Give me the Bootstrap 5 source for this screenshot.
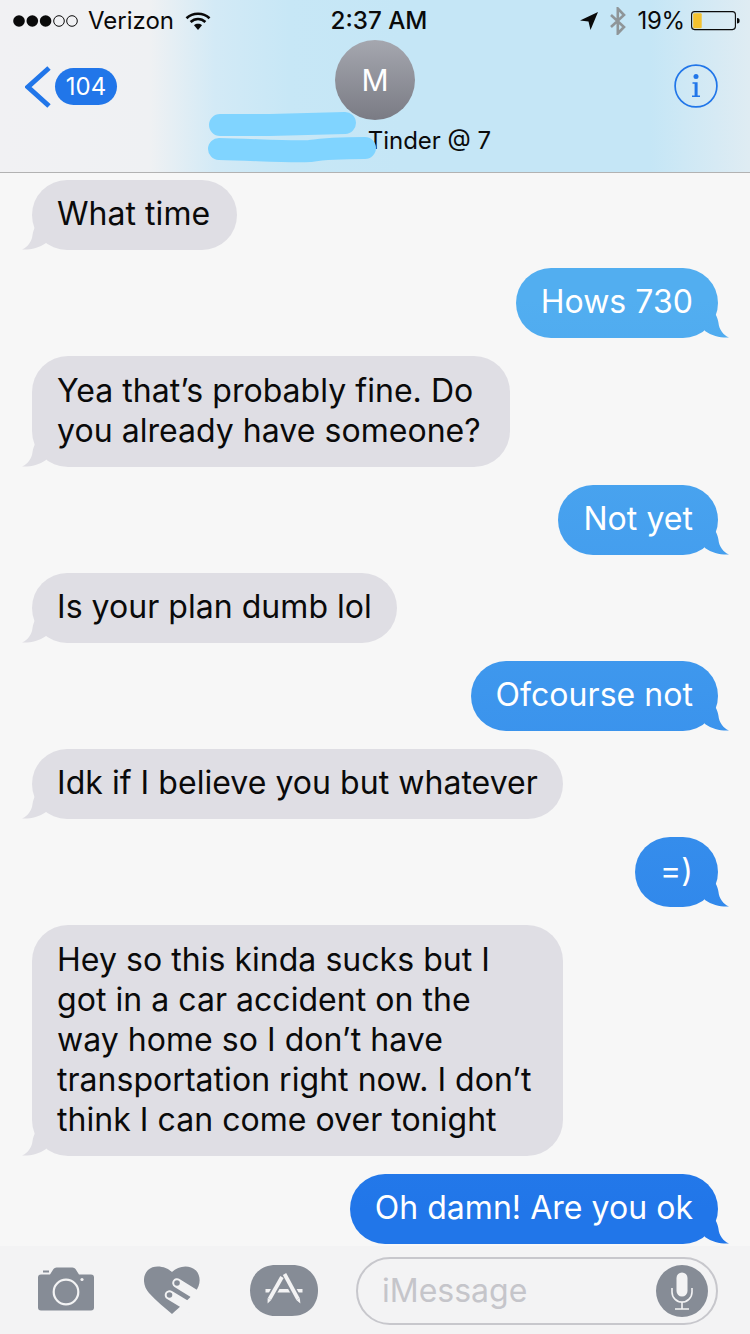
<!DOCTYPE html>
<html lang="en">
<head>
<meta charset="utf-8">
<title>Messages</title>
<link href="https://cdn.jsdelivr.net/npm/bootstrap@5.3.0/dist/css/bootstrap.min.css" rel="stylesheet">
<style>
html,body{height:1334px;overflow:hidden}
body{background:#f7f7f7;font-family:Inter,"Liberation Sans",sans-serif;color:#0a0a0a;width:750px;position:relative}
.phone{height:1334px}
.top-bar{height:173px;border-bottom:1px solid #b2b2b2;background:linear-gradient(90deg,#f1f1f3 0,#eff1f3 150px,#d3eaf6 215px,#c7e7f6 290px,#c5e6f6 400px,#c5e6f6 650px,#dfecf3 750px);flex:none}
.status-row{height:40px;font-size:24px;line-height:40px;padding-top:1px}
.status-side{flex:1 1 0;min-width:0}
.signal-dots{margin:0 7px 0 13px}
.wifi-icon{margin-left:11px}
.bt-icon{margin-left:10px}
.batt-icon{margin:0 10px 0 6px}
.pct{margin-left:10px;letter-spacing:-.2px}
.clock{font-weight:500;padding-left:8px;font-size:24.2px}
.nav-row{height:80px}
.back-arrow{margin:26px 4px 0 25px}
.count-pill{margin-top:28px;width:62px;height:37px;border-radius:19px;background:#2176e9;color:#fff;font-size:24px;line-height:37px;text-align:center}
.avatar-disc{width:80px;height:80px;border-radius:50%;background:linear-gradient(180deg,#a5a7af,#7a7b84);color:#fff;font-size:30px;line-height:80px;text-align:center}
.info-icon{margin:24px 32px 0 0}
.sub-row{height:52px;font-size:24px;line-height:40px;padding:1px 0 0 354px}
.scribble{position:absolute;left:200px;top:105px}
.thread{flex:1 1 auto;min-height:0;padding:7px 32px 0;gap:18px}
.msg{position:relative;padding:14px 25px 16px;font-size:32px;line-height:40px;letter-spacing:.04px;border-radius:36px;white-space:nowrap}
.msg::after{content:"";position:absolute;bottom:0;width:30px;height:24px}
.msg-in{align-self:flex-start;background:#dfdee4}
.msg-in::after{left:-10px;background:#dfdee4;clip-path:path("M14 0C12 2 11 6 10.5 9C10 15 6 21 0 23.5C8 24 17 22 24 17L30 0Z")}
.msg-out,.msg-out::after{background:linear-gradient(180deg,#52aef0 300px,#2176e9 1209px) fixed}
.msg-out{align-self:flex-end;color:#fff}
.msg-out::after{right:-11px;clip-path:path("M16 0C18 2 19 6 19.5 9C20 15 24 21 30 23.5C22 24 13 22 6 17L0 0Z")}
.msg-first{width:205px}
.msg-pair{padding:15px 25px 16px;width:478px}
.msg-long{padding:15px 25px 16px;width:531px}
.composer{flex:none;height:88px;background:#f3f3f4;padding:11px 32px 0 38px}
.composer-icons{width:318px;padding-top:8px}
.cam-icon{margin-top:2px}
.heart-icon{margin:1px 0 0 50px}
.store-icon{margin-left:50px}
.input-pill{width:362px;height:68px;border:2px solid #c7c7cc;border-radius:34px;font-size:32px;color:#c5c5ca;padding:0 8px 0 24px}
</style>
</head>
<body>
<div class="phone d-flex flex-column">
  <header class="top-bar">
    <div class="status-row d-flex align-items-center">
      <div class="status-side d-flex align-items-center">
        <svg class="signal-dots" width="68" height="14" viewBox="0 0 68 14" aria-hidden="true"><g fill="#0a0a0a"><circle cx="6" cy="7" r="5.8"/><circle cx="19.3" cy="7" r="5.8"/><circle cx="32.6" cy="7" r="5.8"/></g><g fill="none" stroke="#0a0a0a" stroke-width="1"><circle cx="46" cy="7" r="5.3"/><circle cx="59" cy="7" r="5.3"/></g></svg>
        <span>Verizon</span>
        <svg class="wifi-icon" width="26" height="20" viewBox="0 0 26 20" aria-hidden="true"><g fill="none" stroke="#0a0a0a" stroke-width="2.6"><path d="M1.5 7.2C7.8 1.2 18.2 1.2 24.5 7.2"/><path d="M5.6 11C9.9 7 16.1 7 20.4 11"/></g><path d="M9 14.2C11.3 12.4 14.7 12.4 17 14.2L13 19Z" fill="#0a0a0a"/></svg>
      </div>
      <div class="clock">2:37 AM</div>
      <div class="status-side d-flex align-items-center justify-content-end">
        <svg width="20" height="20" viewBox="0 0 20 20" aria-hidden="true"><path d="M19 1L1 9.5L9.5 10.5L11.5 19Z" fill="#0a0a0a"/></svg>
        <svg class="bt-icon" width="18" height="28" viewBox="0 0 18 28" aria-hidden="true"><path d="M2 8L15 20L8.8 26.5V1.5L15 8L2 20" fill="none" stroke="#8f9598" stroke-width="2.6"/></svg>
        <span class="pct">19%</span>
        <svg class="batt-icon" width="49" height="20" viewBox="0 0 49 20" aria-hidden="true"><rect x=".6" y=".6" width="43.8" height="18" rx="3" fill="none" stroke="#0a0a0a" stroke-width="1.1"/><rect x="2.2" y="2.2" width="8.5" height="15" rx="1" fill="#f4c22f"/><path d="M46 7c2 0 2.6 1 2.6 2.7s-.6 2.7-2.6 2.7Z" fill="#0a0a0a"/></svg>
      </div>
    </div>
    <div class="nav-row d-flex">
      <div class="status-side d-flex align-items-start">
        <svg class="back-arrow" width="26" height="42" viewBox="0 0 26 42" aria-hidden="true"><path d="M24 2L3 21L24 40" fill="none" stroke="#2176e9" stroke-width="5"/></svg>
        <div class="count-pill">104</div>
      </div>
      <div class="avatar-disc">M</div>
      <div class="status-side d-flex justify-content-end align-items-start">
        <svg class="info-icon" width="44" height="44" viewBox="0 0 44 44" aria-hidden="true"><circle cx="22" cy="22" r="20.9" fill="none" stroke="#2176e9" stroke-width="1.7"/><circle cx="22" cy="12.6" r="2.5" fill="#2176e9"/><path d="M18.5 18.2H23.6V31.4H26V33H18V31.4H20.6V19.8H18.5Z" fill="#2176e9"/></svg>
      </div>
    </div>
    <div class="sub-row">. Tinder @ 7</div>
  </header>
  <svg class="scribble" width="185" height="65" viewBox="0 0 185 65" aria-hidden="true"><g fill="none" stroke="#80d4ff" stroke-width="22" stroke-linecap="round"><path d="M20 20H70L145 18"/><path d="M19 44C60 45 90 47 110 46C130 43 150 43 165 43"/></g></svg>
  <main class="thread d-flex flex-column">
    <div class="msg msg-in msg-first">What time</div>
    <div class="msg msg-out">Hows 730</div>
    <div class="msg msg-in msg-pair">Yea that’s probably fine. Do<br>you already have someone?</div>
    <div class="msg msg-out">Not yet</div>
    <div class="msg msg-in">Is your plan dumb lol</div>
    <div class="msg msg-out">Ofcourse not</div>
    <div class="msg msg-in">Idk if I believe you but whatever</div>
    <div class="msg msg-out">=)</div>
    <div class="msg msg-in msg-long">Hey so this kinda sucks but I<br>got in a car accident on the<br>way home so I don’t have<br>transportation right now. I don’t<br>think I can come over tonight</div>
    <div class="msg msg-out">Oh damn! Are you ok</div>
  </main>
  <footer class="composer d-flex">
    <div class="composer-icons d-flex align-items-start">
      <svg class="cam-icon" width="56" height="44" viewBox="0 0 56 44" aria-hidden="true"><path d="M3 7.500H12L15.500 2Q16.500 .5 18.500 .5H34.500Q36.500 .5 37.500 2L41 7.500H53Q56 7.500 56 10.500V40.500Q56 43.500 53 43.500H3Q0 43.500 0 40.500V10.500Q0 7.500 3 7.500Z" fill="#868c96"/><rect x="5" y="3.500" width="6" height="2" fill="#868c96"/><circle cx="28" cy="25" r="12.300" fill="none" stroke="#f3f3f4" stroke-width="2.200"/><circle cx="44" cy="12.500" r="1.600" fill="#f3f3f4"/></svg>
      <svg class="heart-icon" width="56" height="49" viewBox="0 0 56 49" aria-hidden="true"><path d="M28 6C22 0 10 -2 4 4C-2 10 -1 20 5 27C12 35 21 42 28 48C36 41 45 33 51 26C57 19 57 10 52 4.500C45 -2 34 0 28 6Z" fill="#868c96"/><g fill="none" stroke="#f3f3f4" stroke-linecap="round" stroke-width="9.500"><path d="M33 17L62 35"/><path d="M25.500 29L52 45"/></g><circle cx="33" cy="17" r="2.800" fill="#868c96"/><circle cx="25.500" cy="29" r="2.800" fill="#868c96"/></svg>
      <svg class="store-icon" width="68" height="51" viewBox="0 0 68 51" aria-hidden="true"><path d="M26 0H42C58 0 68 11 68 25.500C68 40 58 51 42 51H26C10 51 0 40 0 25.500C0 11 10 0 26 0Z" fill="#868c96"/><path d="M15.500 25.700H52.500" stroke="#f3f3f4" stroke-width="3.600"/><g fill="none" stroke="#868c96" stroke-width="7.500"><path d="M32 12L19.500 34"/><path d="M34.500 10L48 34"/></g><g fill="none" stroke="#f3f3f4" stroke-width="3.800"><path d="M32 12L19.500 34"/><path d="M34.500 9L48 34"/></g><path d="M17.600 33L21.200 35L17.600 38.500ZM46.300 35L49.800 33L50.400 38.500Z" fill="#f3f3f4"/></svg>
    </div>
    <div class="input-pill d-flex align-items-center justify-content-between">
      <span>iMessage</span>
      <svg width="52" height="52" viewBox="0 0 52 52" aria-hidden="true"><circle cx="26" cy="26" r="26" fill="#868c96"/><rect x="20.500" y="7.500" width="11" height="24" rx="5.500" fill="#f3f3f4"/><path d="M16 23V27C16 32.500 20.500 37 26 37C31.500 37 36 32.500 36 27V23M26 37V43.500M19 44H33" fill="none" stroke="#f3f3f4" stroke-width="1.600"/></svg>
    </div>
  </footer>
</div>
</body>
</html>
